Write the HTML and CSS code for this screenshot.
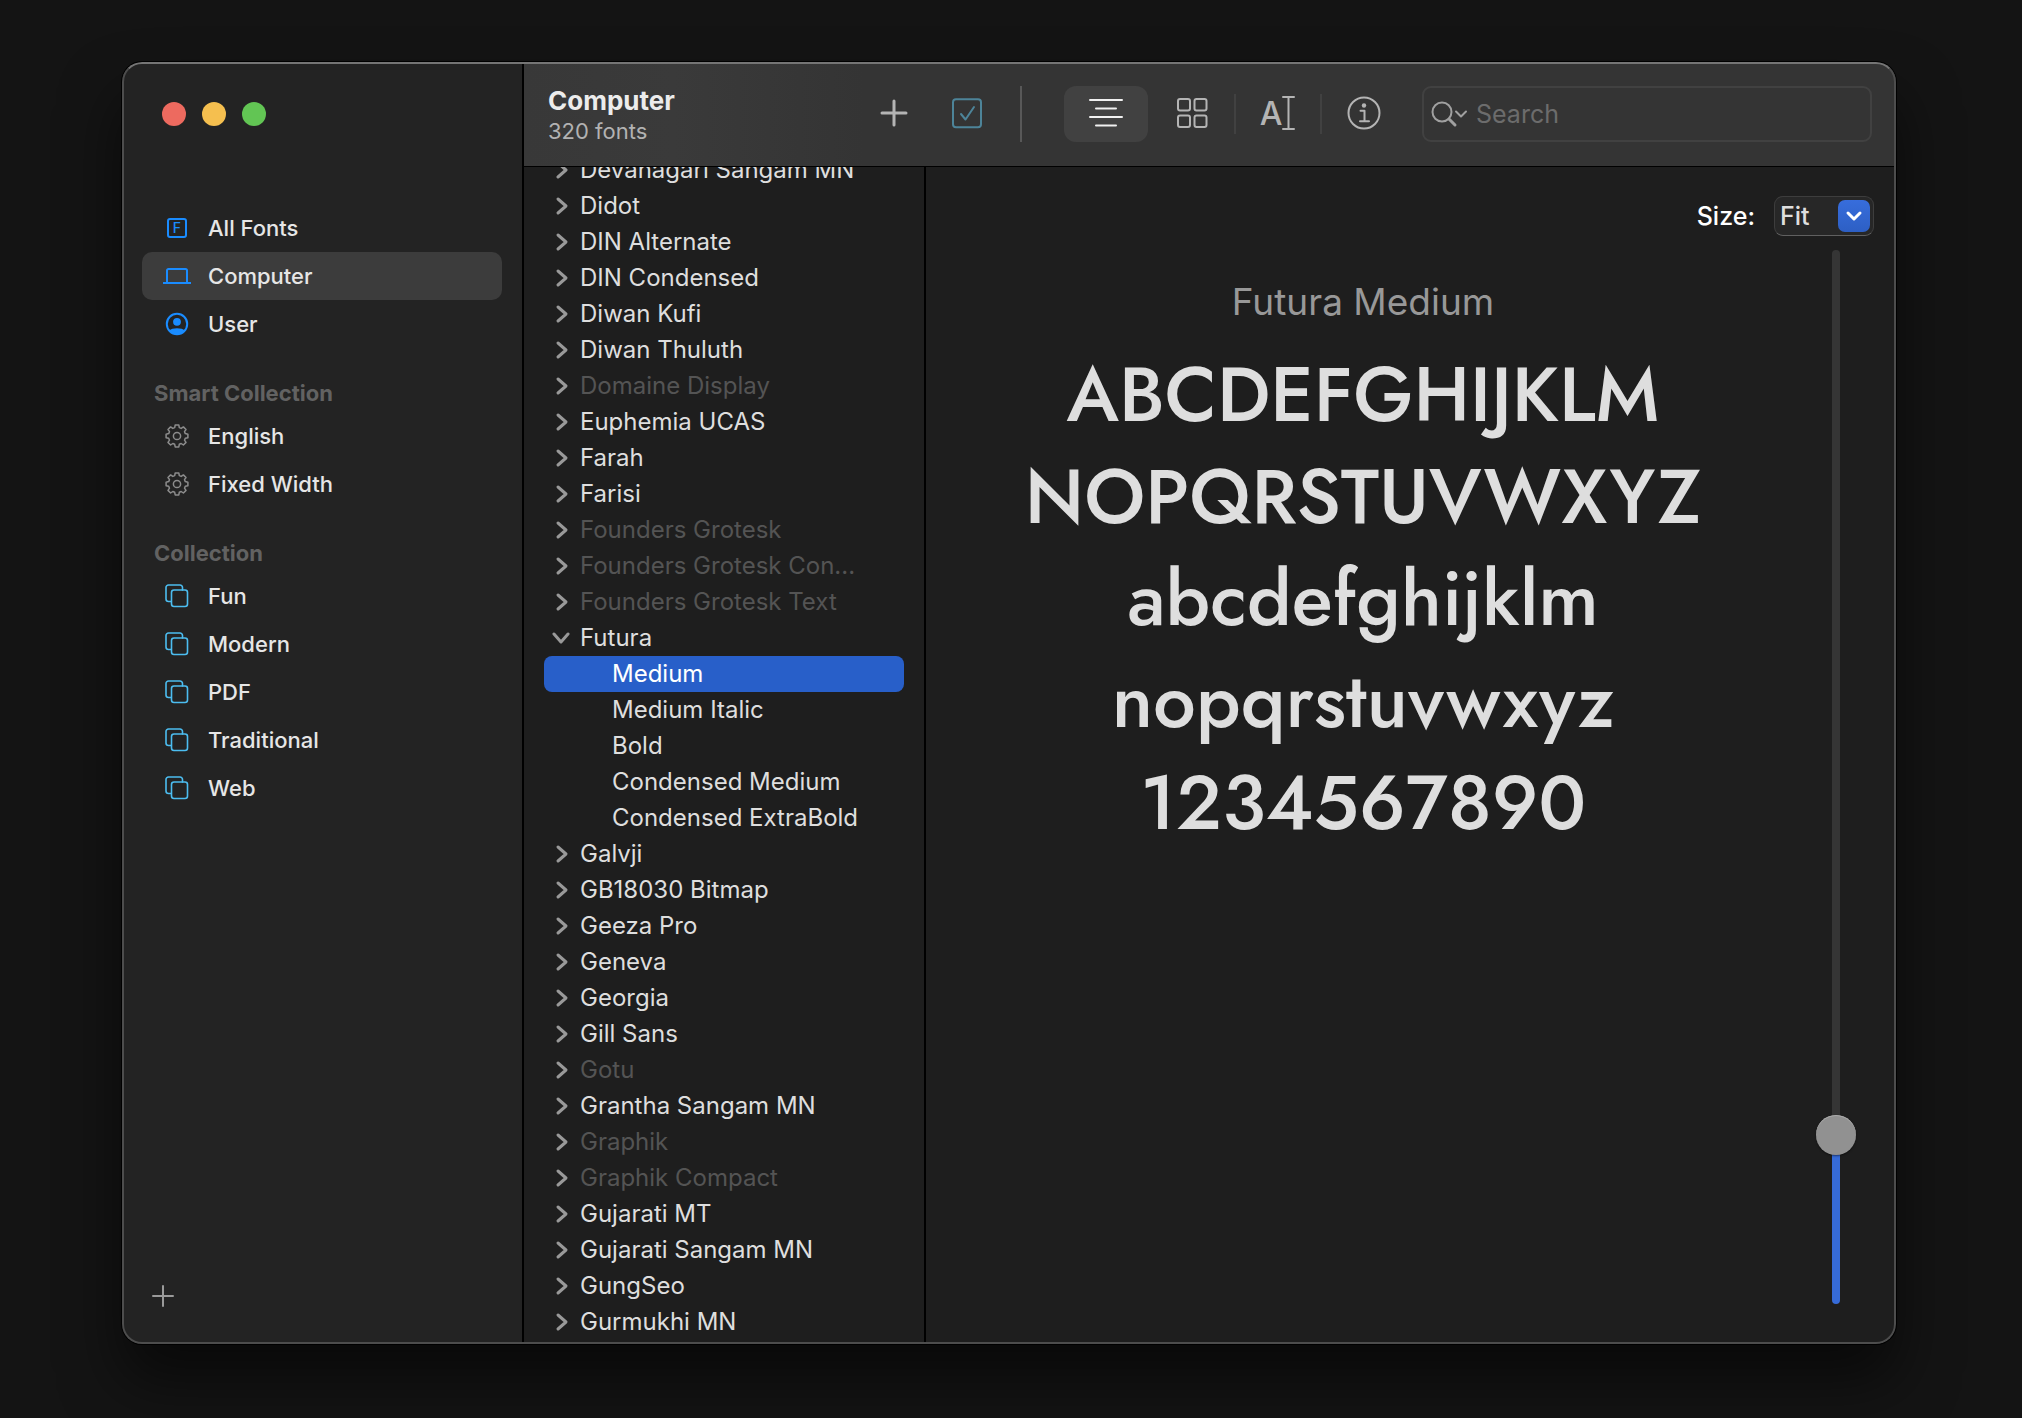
FILE: index.html
```html
<!DOCTYPE html>
<html lang="en">
<head>
<meta charset="utf-8">
<meta name="viewport" content="width=device-width, initial-scale=1">
<title>Font Book</title>
<link rel="stylesheet" href="styles.css">
</head>
<body>
<svg class="defs" aria-hidden="true">
  <symbol id="stack" viewBox="0 0 24 24"><path d="M6 17.500H3.500a2.500 2.500 0 0 1-2.500-2.500V3.500A2.500 2.500 0 0 1 3.500 1H15a2.500 2.500 0 0 1 2.500 2.500V6"/><rect x="6.500" y="6" width="16" height="16.500" rx="2.500"/></symbol>
  <symbol id="gear" viewBox="0 0 24 24"><circle cx="12" cy="12" r="3.600"/><path d="M10.200 1h3.600l.5 2.600 1.900.8 2.200-1.500 2.600 2.600-1.500 2.200.8 1.900 2.600.6v3.600l-2.600.5-.8 1.900 1.500 2.200-2.600 2.600-2.200-1.500-1.900.8-.5 2.600h-3.600l-.5-2.600-1.900-.8L5.600 21 3 18.400l1.500-2.200-.8-1.900-2.600-.5v-3.600l2.600-.6.8-1.900L3 5.500l2.600-2.600 2.200 1.500 1.900-.8z"/></symbol>
  <symbol id="right" viewBox="0 0 20 20"><path d="M6 3l8 7-8 7"/></symbol>
  <symbol id="down" viewBox="0 0 20 20"><path d="M2 6l7 8 7-8"/></symbol>
</svg>
<div class="window">
  <aside class="sidebar">
    <div class="lights">
      <button class="light red" aria-label="Close"></button>
      <button class="light yellow" aria-label="Minimize"></button>
      <button class="light green" aria-label="Zoom"></button>
    </div>
    <nav class="nav">
      <button class="item"><svg class="icon blue" viewBox="0 0 24 24"><rect x="3" y="3" width="18" height="18" rx="2"/><text x="12" y="17" class="glyph-f">F</text></svg>All Fonts</button>
      <button class="item current"><svg class="icon wide blue" viewBox="0 0 28 24"><path d="M4 18V6.500A1.500 1.500 0 0 1 5.500 5h17A1.500 1.500 0 0 1 24 6.500V18"/><path class="base" d="M0 19h28"/></svg>Computer</button>
      <button class="item"><svg class="icon blue" viewBox="0 0 24 24"><circle cx="12" cy="12" r="10.200"/><circle class="solid" cx="12" cy="9.800" r="3.900"/><path class="solid" d="M4.500 18.500c2-3 13-3 15 0-4 5-11 5-15 0z"/></svg>User</button>
      <h2 class="group">Smart Collection</h2>
      <button class="item"><svg class="icon gray"><use href="#gear"/></svg>English</button>
      <button class="item"><svg class="icon gray"><use href="#gear"/></svg>Fixed Width</button>
      <h2 class="group">Collection</h2>
      <button class="item"><svg class="icon cyan"><use href="#stack"/></svg>Fun</button>
      <button class="item"><svg class="icon cyan"><use href="#stack"/></svg>Modern</button>
      <button class="item"><svg class="icon cyan"><use href="#stack"/></svg>PDF</button>
      <button class="item"><svg class="icon cyan"><use href="#stack"/></svg>Traditional</button>
      <button class="item"><svg class="icon cyan"><use href="#stack"/></svg>Web</button>
    </nav>
    <button class="new" aria-label="New collection"><svg viewBox="0 0 24 24"><path d="M12 2v20M2 12h20"/></svg></button>
  </aside>

  <main class="main">
    <header class="toolbar">
      <div class="heading">
        <h1>Computer</h1>
        <p>320 fonts</p>
      </div>
      <div class="actions">
        <button class="tool" aria-label="Add fonts"><svg viewBox="0 0 34 34"><path class="thick" d="M17 4v24M5 16h24"/></svg></button>
        <button class="tool teal" aria-label="Disable fonts"><svg viewBox="0 0 34 34"><rect x="4" y="2.200" width="28" height="28" rx="3"/><path d="M12 17l4.500 5.500L25 10"/></svg></button>
      </div>
      <span class="rule tall"></span>
      <div class="views">
        <button class="view active" aria-label="Sample"><svg viewBox="0 0 34 34"><path d="M1 3h32M7 11.500h20M1 20h32M7 28.500h20"/></svg></button>
        <button class="view" aria-label="Repertoire"><svg viewBox="0 0 34 34"><rect x="3" y="2" width="12" height="11.500" rx="2"/><rect x="19.500" y="2" width="12" height="11.500" rx="2"/><rect x="3" y="18.500" width="12" height="11.500" rx="2"/><rect x="19.500" y="18.500" width="12" height="11.500" rx="2"/></svg></button>
        <span class="rule"></span>
        <button class="view" aria-label="Custom"><svg viewBox="0 0 34 34"><text x="10" y="28" class="glyph-a">A</text><path d="M22 0h11M22 32h11M27.500 0v32"/></svg></button>
        <span class="rule"></span>
        <button class="view" aria-label="Information"><svg viewBox="0 0 34 34"><circle cx="17" cy="16" r="15.500"/><circle class="dot" cx="17" cy="8.500" r="2.200"/><path d="M13.500 13.700h4v10M13 24.200h9"/></svg></button>
      </div>
      <label class="search">
        <svg viewBox="0 0 36 26" aria-hidden="true"><circle cx="11" cy="11" r="9.500"/><path class="handle" d="M18 18l6 6"/><path d="M25 10.500l5 5 5-5"/></svg>
        <input type="search" placeholder="Search" aria-label="Search">
      </label>
    </header>

    <div class="content">
      <div class="list">
        <ul>
          <li><button class="row"><svg><use href="#right"/></svg>Devanagari Sangam MN</button></li>
          <li><button class="row"><svg><use href="#right"/></svg>Didot</button></li>
          <li><button class="row"><svg><use href="#right"/></svg>DIN Alternate</button></li>
          <li><button class="row"><svg><use href="#right"/></svg>DIN Condensed</button></li>
          <li><button class="row"><svg><use href="#right"/></svg>Diwan Kufi</button></li>
          <li><button class="row"><svg><use href="#right"/></svg>Diwan Thuluth</button></li>
          <li><button class="row off"><svg><use href="#right"/></svg>Domaine Display</button></li>
          <li><button class="row"><svg><use href="#right"/></svg>Euphemia UCAS</button></li>
          <li><button class="row"><svg><use href="#right"/></svg>Farah</button></li>
          <li><button class="row"><svg><use href="#right"/></svg>Farisi</button></li>
          <li><button class="row off"><svg><use href="#right"/></svg>Founders Grotesk</button></li>
          <li><button class="row off"><svg><use href="#right"/></svg>Founders Grotesk Con...</button></li>
          <li><button class="row off"><svg><use href="#right"/></svg>Founders Grotesk Text</button></li>
          <li><button class="row" aria-expanded="true"><svg><use href="#down"/></svg>Futura</button>
            <ul>
              <li><button class="row style selected">Medium</button></li>
              <li><button class="row style">Medium Italic</button></li>
              <li><button class="row style">Bold</button></li>
              <li><button class="row style">Condensed Medium</button></li>
              <li><button class="row style">Condensed ExtraBold</button></li>
            </ul>
          </li>
          <li><button class="row"><svg><use href="#right"/></svg>Galvji</button></li>
          <li><button class="row"><svg><use href="#right"/></svg>GB18030 Bitmap</button></li>
          <li><button class="row"><svg><use href="#right"/></svg>Geeza Pro</button></li>
          <li><button class="row"><svg><use href="#right"/></svg>Geneva</button></li>
          <li><button class="row"><svg><use href="#right"/></svg>Georgia</button></li>
          <li><button class="row"><svg><use href="#right"/></svg>Gill Sans</button></li>
          <li><button class="row off"><svg><use href="#right"/></svg>Gotu</button></li>
          <li><button class="row"><svg><use href="#right"/></svg>Grantha Sangam MN</button></li>
          <li><button class="row off"><svg><use href="#right"/></svg>Graphik</button></li>
          <li><button class="row off"><svg><use href="#right"/></svg>Graphik Compact</button></li>
          <li><button class="row"><svg><use href="#right"/></svg>Gujarati MT</button></li>
          <li><button class="row"><svg><use href="#right"/></svg>Gujarati Sangam MN</button></li>
          <li><button class="row"><svg><use href="#right"/></svg>GungSeo</button></li>
          <li><button class="row"><svg><use href="#right"/></svg>Gurmukhi MN</button></li>
        </ul>
      </div>

      <section class="preview">
        <div class="size">
          <label for="size">Size:</label>
          <div class="combo">
            <select id="size"><option>Fit</option><option>12</option><option>24</option><option>48</option></select>
            <span class="arrow"><svg viewBox="0 0 20 20"><path d="M4 7l6 6 6-6"/></svg></span>
          </div>
        </div>
        <div class="stage">
          <div class="sample">
            <h2>Futura Medium</h2>
            <p>ABCDEFGHIJKLM</p>
            <p>NOPQRSTUVWXYZ</p>
            <p>abcdefghijklm</p>
            <p>nopqrstuvwxyz</p>
            <p>1234567890</p>
          </div>
          <input class="slider" type="range" min="0" max="1000" value="147" aria-label="Sample size">
        </div>
      </section>
    </div>
  </main>
</div>
</body>
</html>
```

FILE: styles.css
```css
* { box-sizing: border-box; }

body {
  margin: 0;
  height: 100vh;
  padding: 62px 126px 74px 122px;
  background: #141414;
  color: #dedede;
  font: 500 22px/36px Inter, "Liberation Sans", sans-serif;
  overflow: hidden;
}

h1, h2, p, ul { margin: 0; padding: 0; }
ul { list-style: none; }

button, input, select {
  margin: 0;
  padding: 0;
  border: 0;
  background: none;
  color: inherit;
  font: inherit;
}

svg {
  display: block;
  flex: none;
  overflow: visible;
  fill: none;
  stroke: currentColor;
  stroke-width: 2;
  stroke-linecap: round;
  stroke-linejoin: round;
}

svg text { fill: currentColor; stroke: none; text-anchor: middle; }

.defs { position: absolute; width: 0; height: 0; }

.window {
  position: relative;
  display: flex;
  height: 100%;
  border-radius: 20px;
  overflow: hidden;
  background: #1e1e1e;
  box-shadow: 0 0 0 1px #000, 0 36px 60px rgba(0, 0, 0, .55);
}

/* light rim drawn over the panes */
.window::after {
  content: "";
  position: absolute;
  inset: 0;
  border: 2px solid #4d4d4d;
  border-top-color: #757575;
  border-radius: 20px;
  pointer-events: none;
}

/* Sidebar */
.sidebar {
  flex: none;
  display: flex;
  flex-direction: column;
  width: 402px;
  padding: 40px 20px 36px;
  border-right: 2px solid #000;
  background: #232323;
}

.lights { display: flex; gap: 16px; padding-left: 20px; margin-bottom: 78px; }
.light { width: 24px; height: 24px; border-radius: 50%; }
.red { background: #ed6a5f; }
.yellow { background: #f5bf4f; }
.green { background: #62c554; }

.nav { flex: 1; }

.item {
  display: flex;
  align-items: center;
  gap: 17px;
  width: 100%;
  height: 48px;
  padding-left: 21px;
  border-radius: 10px;
  color: #e6e6e6;
}

.current { background: #3c3c3c; }
.icon { width: 28px; height: 24px; }
.icon.blue { color: #1a8cff; }
.icon.gray { color: #8c8c8c; stroke-width: 1.5; }
.icon.cyan { color: #4cbdf0; stroke-width: 1.6; }
.icon .solid { fill: currentColor; stroke: none; }
.icon .base { stroke-linecap: butt; }
.glyph-f { font: 500 14px Inter, sans-serif; }

.group {
  height: 38px;
  margin-top: 26px;
  padding-left: 12px;
  color: #626262;
  font-size: 22px;
  font-weight: 700;
  line-height: 38px;
}

.new { width: 24px; height: 24px; margin-left: 9px; color: #9a9a9a; }
.new svg { width: 24px; height: 24px; }

/* Toolbar */
.main { flex: 1; display: flex; flex-direction: column; min-width: 0; }

.toolbar {
  flex: none;
  display: flex;
  align-items: center;
  height: 105px;
  padding: 0 24px;
  border-bottom: 1px solid #000;
  background: linear-gradient(90deg, #383838, #3a3a3a 150px, #343434 340px);
}

.heading { width: 324px; padding-top: 3px; }
.heading h1 { color: #ececec; font-size: 26px; font-weight: 700; line-height: 30px; }
.heading p { color: #b2b2b2; font-size: 22px; font-weight: 400; line-height: 30px; }

.actions { display: flex; gap: 28px; margin-right: 32px; }
.tool { display: grid; place-items: center; width: 44px; height: 56px; color: #b4b4b4; }
.tool svg, .view svg { width: 34px; height: 34px; }
.teal { color: #4d8499; }
.thick { stroke-width: 3; }

.rule { width: 2px; height: 40px; background: #414141; }
.rule.tall { height: 56px; margin-right: 42px; background: #585858; }

.views { display: flex; align-items: center; }
.view { display: grid; place-items: center; width: 84px; height: 56px; border-radius: 12px; color: #b4b4b4; }
.view.active { margin-right: 2px; background: #414141; color: #f0f0f0; }
.view .dot { fill: currentColor; stroke: none; }
.glyph-a { font: 500 32px Inter, sans-serif; }

.search {
  flex: 1;
  display: flex;
  align-items: center;
  gap: 9px;
  min-width: 0;
  height: 56px;
  margin-left: 16px;
  padding: 0 8px 0 7px;
  border: 2px solid #414141;
  border-radius: 9px;
}

.search svg { width: 36px; height: 26px; color: #a0a0a0; }
.search .handle { stroke-width: 3; }
.search input { flex: 1; min-width: 0; outline: 0; appearance: none; font-size: 25px; font-weight: 400; }
.search input::placeholder { color: #6c6c6c; }

/* Font list */
.content { flex: 1; display: flex; min-height: 0; }

.list {
  flex: none;
  width: 402px;
  padding: 0 20px;
  border-right: 2px solid #000;
  overflow: hidden;
}

/* scrolled part of a row down */
.list > ul { margin-top: -15px; }

.row {
  display: flex;
  align-items: center;
  gap: 8px;
  width: 100%;
  height: 36px;
  padding-left: 8px;
  border-radius: 8px;
  font-size: 24px;
  font-weight: 400;
  white-space: nowrap;
}

.row svg { width: 20px; height: 20px; color: #999; stroke-width: 3; }
.row.off { color: #545454; }
.row.style { padding-left: 68px; }
.row.selected { background: #285fc9; color: #fff; }

/* Preview */
.preview { flex: 1; display: flex; flex-direction: column; min-width: 0; padding: 29px 22px 40px 0; }

.size { display: flex; justify-content: flex-end; align-items: center; gap: 19px; color: #fff; font-size: 25px; }

.combo {
  display: grid;
  align-items: center;
  width: 100px;
  height: 40px;
  border: 1px solid #3d3d3d;
  border-bottom-color: #606060;
  border-radius: 9px;
  background: #272727;
}

.combo > * { grid-area: 1 / 1; }
.combo select { width: 100%; height: 38px; padding-left: 5px; appearance: none; color: #dedede; }

.arrow {
  justify-self: end;
  display: grid;
  place-items: center;
  width: 32px;
  height: 32px;
  margin-right: 3px;
  border-radius: 7px;
  background: linear-gradient(#376ddc, #2d5fc4);
  color: #fff;
  pointer-events: none;
}

.arrow svg { width: 20px; height: 20px; stroke-width: 3; }

.stage { flex: 1; display: flex; min-height: 0; padding: 14px 18px 0 0; }
.sample { flex: 1; min-width: 0; padding: 22px 16px 0 0; text-align: center; }
.sample h2 { margin-bottom: 12px; color: #989898; font-size: 37px; font-weight: 400; line-height: 60px; }
.sample p { font: 500 76px/102px Futura, Jost, Lato, sans-serif; }

.slider {
  width: 40px;
  height: 100%;
  appearance: none;
  writing-mode: vertical-lr;
  direction: rtl;
}

.slider::-webkit-slider-runnable-track {
  width: 8px;
  height: 100%;
  border-radius: 4px;
  background: linear-gradient(to top, #366bd8 16%, #353535 16%);
}

.slider::-webkit-slider-thumb {
  appearance: none;
  width: 40px;
  height: 40px;
  margin-left: -16px;
  border-radius: 50%;
  background: #919191;
  box-shadow: inset 0 1px #aaa, 0 1px 2px rgba(0, 0, 0, .5);
}
```
